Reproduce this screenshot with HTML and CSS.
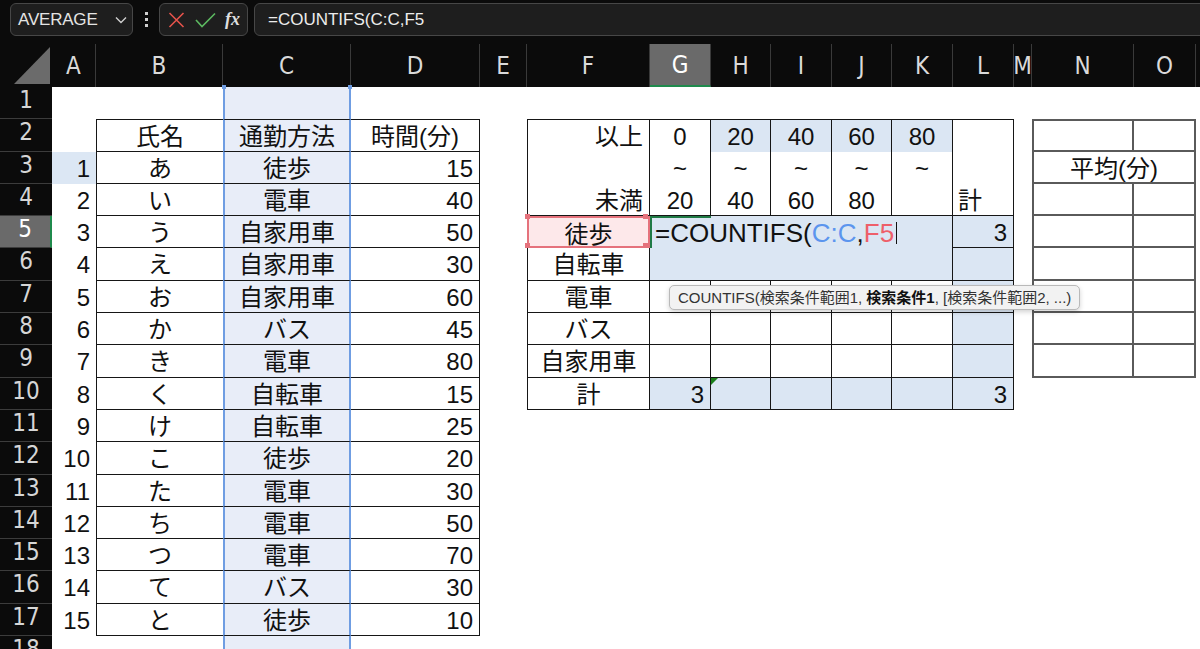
FILE: index.html
```html
<!DOCTYPE html>
<html lang="ja">
  <head>
    <meta charset="utf-8" />
    <title>通勤方法 - COUNTIFS</title>
    <link rel="stylesheet" href="styles.css">
  </head>
  <body>
    <div class="topbar">
      <div class="namebox">
        <span>AVERAGE</span>
        <svg width="12" height="8" viewBox="0 0 12 8"><path d="M1 1.5 L6 6.5 L11 1.5" fill="none" stroke="#cfcfcf" stroke-width="1.4"/></svg>
      </div>
      <div class="grip"><i></i><i></i><i></i></div>
      <div class="fbtns">
        <svg class="cancel" width="17" height="16" viewBox="0 0 17 16"><path d="M1.5 1 L15.5 15 M15.5 1 L1.5 15" stroke="#e5534b" stroke-width="1.6"/></svg>
        <svg class="enter" width="21" height="16" viewBox="0 0 21 16"><path d="M1 8 L7 14.5 L20 1.5" fill="none" stroke="#5cb860" stroke-width="1.6"/></svg>
        <span class="fx">fx</span>
      </div>
      <div class="formula">=COUNTIFS(C:C,F5</div>
    </div>

    <div class="sheet" id="sheet"></div>

    <!-- function hint while editing G5 -->
    <div class="tip">COUNTIFS(検索条件範囲1, <b>検索条件1</b>, [検索条件範囲2, ...)</div>

    <script>
      const cols = "ABCDEFGHIJKLMNOP".split("");
      const cells = {};

      function put(addr, text, cls, span) {
        cells[addr] = { text: text, cls: cls || "", span: span || 1 };
      }

      // left table: 氏名 / 通勤方法 / 時間(分)
      const people = [
        ["あ", "徒歩", 15], ["い", "電車", 40], ["う", "自家用車", 50],
        ["え", "自家用車", 30], ["お", "自家用車", 60], ["か", "バス", 45],
        ["き", "電車", 80], ["く", "自転車", 15], ["け", "自転車", 25],
        ["こ", "徒歩", 20], ["た", "電車", 30], ["ち", "電車", 50],
        ["つ", "電車", 70], ["て", "バス", 30], ["と", "徒歩", 10],
      ];
      put("B2", "氏名", "m bt bl bb");
      put("C2", "通勤方法", "m bt bb");
      put("D2", "時間(分)", "m bt br bb");
      people.forEach(function (p, i) {
        const r = i + 3;
        put("A" + r, String(i + 1), "r" + (r === 3 ? " a3" : ""));
        put("B" + r, p[0], "m bl bb");
        put("C" + r, p[1], "m bb");
        put("D" + r, String(p[2]), "r br bb");
      });

      // right table: 以上 / 未満 bins
      put("F2", "以上", "r bt bl br");
      put("F3", "", "bl br");
      put("F4", "未満", "r bl br bb");
      const lo = ["0", "20", "40", "60", "80"];
      const hi = ["20", "40", "60", "80", ""];
      "GHIJK".split("").forEach(function (c, i) {
        put(c + "2", lo[i], "m bt br" + (i > 0 ? " hl" : ""));
        put(c + "3", "~", "m br");
        put(c + "4", hi[i], "m br bb");
        put(c + "5", "", "hl" + (c === "K" ? " br" : ""));
        put(c + "6", "", "hl bb" + (c === "K" ? " br" : ""));
        for (let r = 7; r <= 9; r++) put(c + r, "", "br bb");
        put(c + "10", "", "hl br bb");
      });
      put("L2", "", "bt br");
      put("L3", "", "br");
      put("L4", "計", "l br bb");
      ["徒歩", "自転車", "電車", "バス", "自家用車", "計"].forEach(function (t, i) {
        put("F" + (i + 5), t, "m bl br bb" + (i === 0 ? " pick" : ""));
        put("L" + (i + 5), "", "hl br bb");
      });
      put("G5", '=COUNTIFS(<span class="ref-c">C:C</span>,<span class="ref-f">F5</span><span class="caret"></span>', "hl edit");
      put("G10", "3", "r hl br bb");
      put("H10", "", "hl br bb flag");
      put("L5", "3", "r hl br bb");
      put("L10", "3", "r hl br bb");

      // 平均 table
      put("N2", "", "gray bt bl br bb");
      put("O2", "", "gray bt br bb");
      put("N3", "平均(分)", "gray m bl br bb", 2);
      for (let r = 4; r <= 9; r++) {
        put("N" + r, "", "gray bl br bb");
        put("O" + r, "", "gray br bb");
      }

      const sheet = document.getElementById("sheet");
      let html = '<div class="hd corner"></div>';
      cols.forEach(function (c) {
        // column P sits past the right edge, its letter is never seen
        const label = c === "P" ? "" : c;
        html += '<div class="hd' + (c === "G" ? " on" : "") + '">' + label + "</div>";
      });
      for (let r = 1; r <= 18; r++) {
        html += '<div class="rh' + (r === 5 ? " on" : "") + '">' + r + "</div>";
        let skip = 0;
        cols.forEach(function (c) {
          if (skip > 0) { skip--; return; }
          const cell = cells[c + r] || { text: "", cls: "", span: 1 };
          let cls = "cell " + cell.cls;
          if (c === "C") cls += " sel";
          if (c === "C" && r === 1) cls += " handles";
          let style = "";
          if (cell.span > 1) {
            style = ' style="grid-column: span ' + cell.span + '"';
            skip = cell.span - 1;
          }
          html += '<div class="' + cls + '"' + style + ">" + cell.text + "</div>";
        });
      }
      sheet.innerHTML = html;
    </script>
  </body>
</html>
```

FILE: styles.css
```css
* {
  box-sizing: border-box;
}

body {
  margin: 0;
  height: 649px;
  overflow: hidden;
  background: #0b0b0b;
  font-family: "Liberation Sans", "Noto Sans CJK JP", sans-serif;
  position: relative;
}

/* formula bar */
.topbar {
  height: 44px;
  display: flex;
  align-items: flex-start;
  padding: 3px 0 0 10px;
}

.namebox,
.fbtns,
.formula {
  height: 33px;
  background: #1e1e1e;
  border: 1px solid #474747;
  border-radius: 6px;
  color: #e4e4e4;
  display: flex;
  align-items: center;
}

.namebox {
  width: 123px;
  justify-content: space-between;
  padding: 0 5px 0 7px;
  font-size: 17px;
  letter-spacing: -0.2px;
}

.grip {
  width: 26px;
  height: 33px;
  display: flex;
  flex-direction: column;
  align-items: center;
  justify-content: center;
  gap: 3px;
}

.grip i {
  width: 3px;
  height: 3px;
  background: #cfcfcf;
}

.fbtns {
  width: 89px;
  padding: 0 0 0 8px;
  gap: 10px;
}

.fx {
  font-family: "Liberation Serif", serif;
  font-style: italic;
  font-weight: bold;
  font-size: 18px;
  color: #dedede;
  margin-left: -1px;
}

.formula {
  flex: 1;
  margin: 0 -10px 0 6px;
  padding-left: 13px;
  font-size: 17px;
  color: #ececec;
}

/* grid */
.sheet {
  display: grid;
  grid-template-columns: 52px 44px 127px 128px 129px 47px 123px 61px 60px 61px 60px 61px 61px 18px 102px 62px 100px;
  grid-template-rows: 43px repeat(18, 32.3px);
  background: #fff;
}

.hd {
  background: #0b0b0b;
  color: #dadada;
  border-right: 1px solid #3a3a3a;
  font-family: "DejaVu Sans", sans-serif;
  font-stretch: condensed;
  font-size: 24px;
  display: flex;
  align-items: center;
  justify-content: center;
  overflow: hidden;
  position: relative;
}

.hd.on {
  background: #6a6a6a;
  color: #fff;
  border-bottom: 2px solid #1f8a4c;
}

.corner {
  border-right: none;
}

.corner::after {
  content: "";
  position: absolute;
  left: 14px;
  top: 3px;
  width: 36px;
  height: 37px;
  background: #6b6b6b;
  clip-path: polygon(100% 0, 100% 100%, 0 100%);
}

.rh {
  background: #0b0b0b;
  color: #d6d6d6;
  border-bottom: 1px solid #3c3c3c;
  font-family: "DejaVu Sans", sans-serif;
  font-stretch: condensed;
  font-size: 24px;
  line-height: 26px;
  text-align: center;
}

.rh.on {
  background: #6a6a6a;
  color: #fff;
  border-right: 2px solid #1f8a4c;
}

.cell {
  --line: 1px solid #161616;
  position: relative;
  font-size: 24px;
  line-height: 32px;
  padding: 1px 6px 0;
  color: #111;
  white-space: nowrap;
  overflow: hidden;
}

.cell.gray {
  --line: 2px solid #5a5a5a;
}

.bt { border-top: var(--line); }
.bb { border-bottom: var(--line); }
.bl { border-left: var(--line); }
.br { border-right: var(--line); }

.m { text-align: center; }
.r { text-align: right; }
.l { text-align: left; padding-left: 5px; }

.sel {
  background: #e8edf8;
  border-left: 2px solid #6f9de2;
  border-right: 2px solid #6f9de2;
}

.handles {
  overflow: visible;
}

.handles::before,
.handles::after {
  content: "";
  position: absolute;
  top: -2px;
  width: 4px;
  height: 4px;
  background: #6f9de2;
}

.handles::before { left: -3px; }
.handles::after { right: -3px; }

.hl { background: #dbe6f3; }
.a3 { background: #dce7f4; }

.pick {
  background: #fde8ea;
  border: 2px solid #e5727c;
  overflow: visible;
}

.pick::before {
  content: "";
  position: absolute;
  width: 5px;
  height: 5px;
  background: #e5727c;
  top: -4px;
  left: -4px;
  box-shadow: 118px 0 0 #e5727c, 0 29px 0 #e5727c, 118px 29px 0 #e5727c;
}

.edit {
  overflow: visible;
  z-index: 2;
  border-left: 2px solid #1f7a45;
  border-top: 2px solid #1f7a45;
  padding-left: 3px;
  font-size: 26px;
  line-height: 29px;
}

.ref-c { color: #5b95ee; }
.ref-f { color: #ee5f6a; }

.caret {
  display: inline-block;
  width: 1px;
  height: 22px;
  background: #111;
  margin-left: 2px;
  vertical-align: -2px;
}

.flag::before {
  content: "";
  position: absolute;
  left: 0;
  top: 0;
  border-top: 7px solid #1a7f1a;
  border-right: 7px solid transparent;
}

/* function hint */
.tip {
  position: absolute;
  left: 669px;
  top: 285px;
  height: 25px;
  padding: 0 8px;
  background: #f2f2f2;
  border: 1px solid #b9b9b9;
  border-radius: 5px;
  box-shadow: 0 2px 5px rgba(0, 0, 0, 0.18);
  color: #333;
  font-size: 15px;
  line-height: 23px;
  white-space: nowrap;
  z-index: 3;
}

.tip b {
  color: #111;
}
```
